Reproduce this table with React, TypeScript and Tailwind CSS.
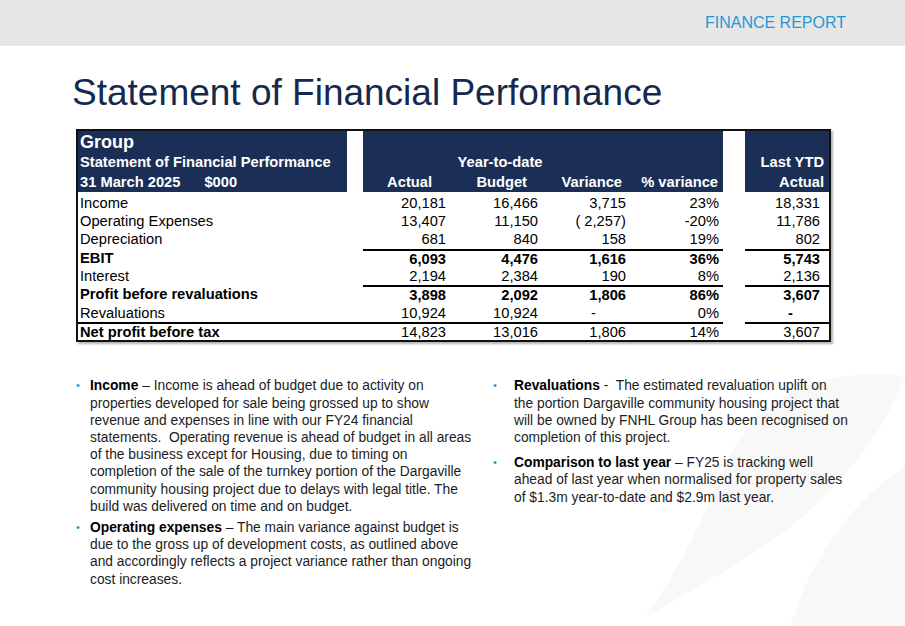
import type { ReactNode } from 'react'

type Line = 'none' | 'nums' | 'all'

interface Row {
  label: string
  values: [string, string, string, string, string]
  bold?: boolean
  boldLabel?: boolean
  line?: Line
}

const ROWS: Row[] = [
  { label: 'Income', values: ['20,181', '16,466', '3,715', '23%', '18,331'] },
  { label: 'Operating Expenses', values: ['13,407', '11,150', '( 2,257)', '-20%', '11,786'] },
  { label: 'Depreciation', values: ['681', '840', '158', '19%', '802'] },
  { label: 'EBIT', values: ['6,093', '4,476', '1,616', '36%', '5,743'], bold: true, line: 'nums' },
  { label: 'Interest', values: ['2,194', '2,384', '190', '8%', '2,136'] },
  {
    label: 'Profit before revaluations',
    values: ['3,898', '2,092', '1,806', '86%', '3,607'],
    bold: true,
    line: 'nums',
  },
  { label: 'Revaluations', values: ['10,924', '10,924', '-', '0%', '-'] },
  {
    label: 'Net profit before tax',
    values: ['14,823', '13,016', '1,806', '14%', '3,607'],
    boldLabel: true,
    line: 'all',
  },
]

const NAVY = 'bg-[#1b2f56]'

function FinanceTable() {
  return (
    <div className="ml-[76px] mt-[14px] w-[755px] border-2 border-[#111] text-[14.7px] leading-none text-black shadow-[2px_2px_2px_rgba(0,0,0,0.3)]">
      {/* header block */}
      <div className="flex h-[61px] font-bold text-white">
        <div className={`flex w-[269px] flex-col ${NAVY} pl-[2px]`}>
          <div className="flex h-[22px] items-center text-[18px]">Group</div>
          <div className="flex h-[19px] items-center">Statement of Financial Performance</div>
          <div className="flex h-[20px] items-center">
            31 March 2025<span className="ml-[24px]">$000</span>
          </div>
        </div>
        <div className="w-[16px]" />
        <div className={`grid w-[360px] grid-cols-[87px_92px_88px_93px] grid-rows-[22px_19px_20px] ${NAVY}`}>
          <div className="col-span-4" />
          <div />
          <div className="flex items-center justify-center whitespace-nowrap pl-[8px]">Year-to-date</div>
          <div />
          <div />
          <div className="flex items-center justify-end pr-[18px]">Actual</div>
          <div className="flex items-center justify-end pr-[15px]">Budget</div>
          <div className="flex items-center justify-end pr-[8px]">Variance</div>
          <div className="flex items-center justify-end pr-[5px]">% variance</div>
        </div>
        <div className="w-[22px]" />
        <div className={`grid w-[84px] grid-rows-[22px_19px_20px] ${NAVY}`}>
          <div />
          <div className="flex items-center justify-end whitespace-nowrap pr-[5px]">Last YTD</div>
          <div className="flex items-center justify-end pr-[5px]">Actual</div>
        </div>
      </div>

      {/* body */}
      <div className="pt-[2px]">
        {ROWS.map((row) => {
          const numLine = row.line === 'nums' || row.line === 'all' ? 'border-t-2 border-black' : ''
          const labelLine = row.line === 'all' ? 'border-t-2 border-black' : ''
          const cell = `flex h-[18.3px] items-center justify-end ${numLine}`
          return (
            <div
              key={row.label}
              className={`grid grid-cols-[269px_16px_87px_92px_88px_93px_22px_84px] ${row.bold ? 'font-bold' : ''}`}
            >
              <div
                className={`flex h-[18.3px] items-center pl-[2px] ${labelLine} ${row.boldLabel ? 'font-bold' : ''}`}
              >
                {row.label}
              </div>
              <div className={`h-[18.3px] ${labelLine}`} />
              <div className={`${cell} pr-[4px]`}>{row.values[0]}</div>
              <div className={`${cell} pr-[4px]`}>{row.values[1]}</div>
              <div className={`${cell} whitespace-pre pr-[4px]`}>
                {row.values[2] === '-' ? <span className="pr-[30px]">-</span> : row.values[2]}
              </div>
              <div className={`${cell} pr-[4px]`}>{row.values[3]}</div>
              <div />
              <div className={`${cell} pr-[9px] ${row.values[4] === '-' ? 'font-bold' : ''}`}>
                {row.values[4] === '-' ? <span className="pr-[27px]">-</span> : row.values[4]}
              </div>
            </div>
          )
        })}
      </div>
    </div>
  )
}

function Bullet({ gap, children, className = '' }: { gap: string; children: ReactNode; className?: string }) {
  return (
    <li className={`flex ${className}`}>
      <span className={`${gap} shrink-0 text-[11px] leading-[17px] text-[#1e9ad6]`}>•</span>
      <p className="whitespace-nowrap">{children}</p>
    </li>
  )
}

function Lines({ lines }: { lines: string[] }) {
  return (
    <>
      {lines.map((l, i) => (
        <span key={i}>
          {l}
          {i < lines.length - 1 && <br />}
        </span>
      ))}
    </>
  )
}

function Watermark() {
  return (
    <svg
      className="pointer-events-none absolute bottom-0 right-0"
      width="300"
      height="270"
      viewBox="0 0 300 270"
      fill="#f8f8f8"
    >
      <path d="M300 20 C220 10 150 40 120 110 C95 170 70 220 40 262 C110 220 170 190 220 140 C260 100 285 60 300 20 Z" />
      <path d="M300 110 C255 140 225 180 200 230 L185 270 L300 270 Z" />
    </svg>
  )
}

export default function App() {
  return (
    <div className="relative h-[626px] w-[905px] overflow-hidden bg-white font-['Liberation_Sans',Arial,sans-serif]">
      <Watermark />
      <header className="relative flex h-[46px] items-center justify-end bg-[#e6e6e6] pr-[59px]">
        <span className="text-[16px] text-[#1e9ad6]">FINANCE REPORT</span>
      </header>

      <h1 className="relative ml-[72px] mt-[25px] h-[44px] text-[37px] leading-[44px] text-[#15294e]">
        Statement of Financial Performance
      </h1>

      <div className="relative">
        <FinanceTable />
      </div>

      <div className="relative mt-[35px] flex text-[13.8px] leading-[17.2px] text-[#1c1c1c]">
        <ul className="ml-[76px] w-[417px]">
          <Bullet gap="w-[14px]">
            <b className="text-black">Income</b>
            <Lines
              lines={[
                ' – Income is ahead of budget due to activity on',
                'properties developed for sale being grossed up to show',
                'revenue and expenses in line with our FY24 financial',
                'statements.\u00a0 Operating revenue is ahead of budget in all areas',
                'of the business except for Housing, due to timing on',
                'completion of the sale of the turnkey portion of the Dargaville',
                'community housing project due to delays with legal title. The',
                'build was delivered on time and on budget.',
              ]}
            />
          </Bullet>
          <Bullet gap="w-[14px]" className="mt-[4px]">
            <b className="text-black">Operating expenses</b>
            <Lines
              lines={[
                ' – The main variance against budget is',
                'due to the gross up of development costs, as outlined above',
                'and accordingly reflects a project variance rather than ongoing',
                'cost increases.',
              ]}
            />
          </Bullet>
        </ul>
        <ul className="w-[390px]">
          <Bullet gap="w-[21px]">
            <b className="text-black">Revaluations</b>
            <Lines
              lines={[
                ' -\u00a0 The estimated revaluation uplift on',
                'the portion Dargaville community housing project that',
                'will be owned by FNHL Group has been recognised on',
                'completion of this project.',
              ]}
            />
          </Bullet>
          <Bullet gap="w-[21px]" className="mt-[8px]">
            <b className="text-black">Comparison to last year</b>
            <Lines
              lines={[
                ' – FY25 is tracking well',
                'ahead of last year when normalised for property sales',
                'of $1.3m year-to-date and $2.9m last year.',
              ]}
            />
          </Bullet>
        </ul>
      </div>
    </div>
  )
}
